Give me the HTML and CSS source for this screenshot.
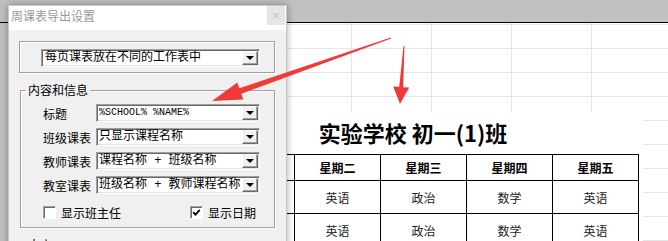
FILE: index.html
```html
<!DOCTYPE html>
<html>
<head>
  <meta charset="UTF-8">
  <link rel="stylesheet" href="styles.css">
</head>
<body>
  <!-- 背景工作表 -->
  <div class="sheet">
    <div class="sheet-top"></div>
    <div class="sheet-body">
      <div class="print-area">
        <div class="print-title">实验学校 初一(1)班</div>
        <table class="timetable">
          <tr><th>星期一</th><th>星期二</th><th>星期三</th><th>星期四</th><th>星期五</th></tr>
          <tr><td>语文</td><td>英语</td><td>政治</td><td>数学</td><td>英语</td></tr>
          <tr><td>语文</td><td>英语</td><td>政治</td><td>数学</td><td>英语</td></tr>
        </table>
      </div>
    </div>
  </div>

  <!-- 导出设置对话框 -->
  <div class="dialog">
    <div class="dialog-title">
      <span>周课表导出设置</span>
      <button class="dialog-close">×</button>
    </div>
    <div class="dialog-body">
      <div class="group-plain">
        <div class="combo combo-wide"><span class="combo-text">每页课表放在不同的工作表中</span><span class="combo-btn"></span></div>
      </div>

      <fieldset class="group">
        <legend>内容和信息</legend>
        <div class="form-rows">
          <label>标题</label>
          <div class="combo"><span class="combo-text mono">%SCHOOL% %NAME%</span><span class="combo-btn"></span></div>
          <label>班级课表</label>
          <div class="combo"><span class="combo-text">只显示课程名称</span><span class="combo-btn"></span></div>
          <label>教师课表</label>
          <div class="combo"><span class="combo-text">课程名称 + 班级名称</span><span class="combo-btn"></span></div>
          <label>教室课表</label>
          <div class="combo"><span class="combo-text">班级名称 + 教师课程名称</span><span class="combo-btn"></span></div>
        </div>
        <div class="check-row">
          <span class="check-item"><span class="checkbox"></span>显示班主任</span>
          <span class="check-item">
            <span class="checkbox">
              <svg width="9" height="9" viewBox="0 0 9 9"><path d="M1.2 4.2 L3.4 6.6 L7.8 1.8" fill="none" stroke="#000" stroke-width="1.8"/></svg>
            </span>显示日期
          </span>
        </div>
      </fieldset>

      <fieldset class="group">
        <legend>大小</legend>
      </fieldset>
    </div>
  </div>

  <!-- 红色标注箭头 -->
  <svg class="arrows" width="668" height="241" viewBox="0 0 668 241">
    <polygon fill="#f03a3a" points="212,101 237.3,82.5 239.3,88.2 390.8,37.4 391.2,38.6 241.3,93.8 243.3,99.5"/>
    <polygon fill="#f03a3a" points="400,104 393.2,86.4 399.2,86.8 403.5,46 404.5,46 403.2,87.2 409.2,87.6"/>
  </svg>
</body>
</html>
```

FILE: styles.css
```css
/* 基础 */
body {
  margin: 0;
  width: 668px;
  height: 241px;
  overflow: hidden;
  position: relative;
  background: #c0c0c0;
  font-family: "Noto Sans CJK SC", sans-serif;
  font-size: 12px;
  color: #000;
}

/* 工作表 */
.sheet-top {
  height: 22px;
  background: #c0c0c0;
  border-bottom: 1px solid #000;
}

.sheet-body {
  margin-left: 8px;
  height: 218px;
  overflow: hidden;
  background-color: #fff;
  background-image:
    linear-gradient(to right, transparent 79px, #e6e6e6 79px),
    linear-gradient(to bottom, transparent 23px, #e6e6e6 23px);
  background-size: 80px 100%, 100% 24px;
  background-position: 24px 0, 0 2px;
}

.print-area {
  margin: 89px 0 0 175px;
  width: 460px;
  height: 129px;
  background: #fff;
}

.print-title {
  height: 42px;
  line-height: 40px;
  text-align: center;
  font-size: 22px;
  font-weight: 700;
}

.timetable {
  margin-left: 25px;
  border-collapse: collapse;
  table-layout: fixed;
}

.timetable th,
.timetable td {
  width: 85px;
  padding: 0;
  border: 1px solid #000;
  text-align: center;
  font-size: 12px;
}

.timetable th {
  height: 25px;
  font-weight: 700;
}

.timetable td {
  height: 32px;
  color: #222;
}

/* 对话框 */
.dialog {
  position: absolute;
  left: 8px;
  top: 5px;
  width: 277px;
  height: 250px;
  border: 1px solid #c8c8c8;
  background: #f0f0f0;
  box-shadow: 0 0 7px rgba(0, 0, 0, 0.35);
}

.dialog-title {
  display: flex;
  justify-content: space-between;
  align-items: flex-start;
  height: 24px;
  padding-left: 2px;
  background: #fff;
}

.dialog-title span {
  line-height: 20px;
  color: #9a9a9a;
}

.dialog-close {
  width: 18px;
  height: 19px;
  margin-right: 1px;
  padding: 0;
  border: 0;
  background: #e6e6e6;
  color: #c4c4c4;
  font-family: "DejaVu Sans", sans-serif;
  font-size: 11px;
  line-height: 19px;
}

.dialog-body {
  padding: 11px 11px 0 10px;
}

/* 分组框 */
.group-plain {
  padding: 7px 14px 5px 21px;
  border: 1px solid #a0a0a0;
  box-shadow: inset 1px 1px 0 #fff, 1px 1px 0 #fff;
}

.group {
  margin: 10px 0 0 1px;
  padding: 7px 0 8px 5px;
  min-width: 0;
  border: 1px solid #a0a0a0;
  box-shadow: inset 1px 1px 0 #fff, 1px 1px 0 #fff;
}

.group legend {
  padding: 0 2px;
  line-height: 14px;
}

.form-rows {
  display: grid;
  grid-template-columns: 53px 1fr;
  row-gap: 6px;
  align-items: center;
  margin: 0 14px 0 17px;
}

/* 下拉框 */
.combo {
  display: flex;
  align-items: center;
  height: 18px;
  box-sizing: border-box;
  padding: 1px;
  border: 1px solid;
  border-color: #a0a0a0 #fff #fff #a0a0a0;
  box-shadow: inset 1px 1px 0 #696969, inset -1px -1px 0 #e3e3e3;
  background: #fff;
}

.combo-text {
  flex: 1;
  padding-left: 1px;
  line-height: 16px;
  white-space: pre;
  overflow: hidden;
  font-family: "Liberation Mono", "Noto Sans CJK SC", monospace;
  font-size: 12px;
}

.combo-wide .combo-text {
  padding-left: 2px;
}

.combo-text.mono {
  font-size: 10px;
}

.combo-btn {
  display: flex;
  align-items: center;
  justify-content: center;
  width: 16px;
  height: 14px;
  box-sizing: border-box;
  border: 1px solid;
  border-color: #fff #696969 #696969 #fff;
  box-shadow: inset -1px -1px 0 #a0a0a0;
  background: #f0f0f0;
}

.combo-btn::after {
  content: "";
  border-left: 4px solid transparent;
  border-right: 4px solid transparent;
  border-top: 4px solid #000;
}

/* 复选框 */
.check-row {
  display: flex;
  justify-content: space-between;
  margin: 12px 18px 0 17px;
}

.check-item {
  display: flex;
  align-items: center;
  line-height: 13px;
}

.checkbox {
  display: flex;
  align-items: center;
  justify-content: center;
  width: 13px;
  height: 13px;
  box-sizing: border-box;
  margin-right: 5px;
  border: 1px solid;
  border-color: #a0a0a0 #fff #fff #a0a0a0;
  box-shadow: inset 1px 1px 0 #696969;
  background: #fff;
}

/* 标注箭头 */
.arrows {
  position: absolute;
  left: 0;
  top: 0;
  pointer-events: none;
}
```
